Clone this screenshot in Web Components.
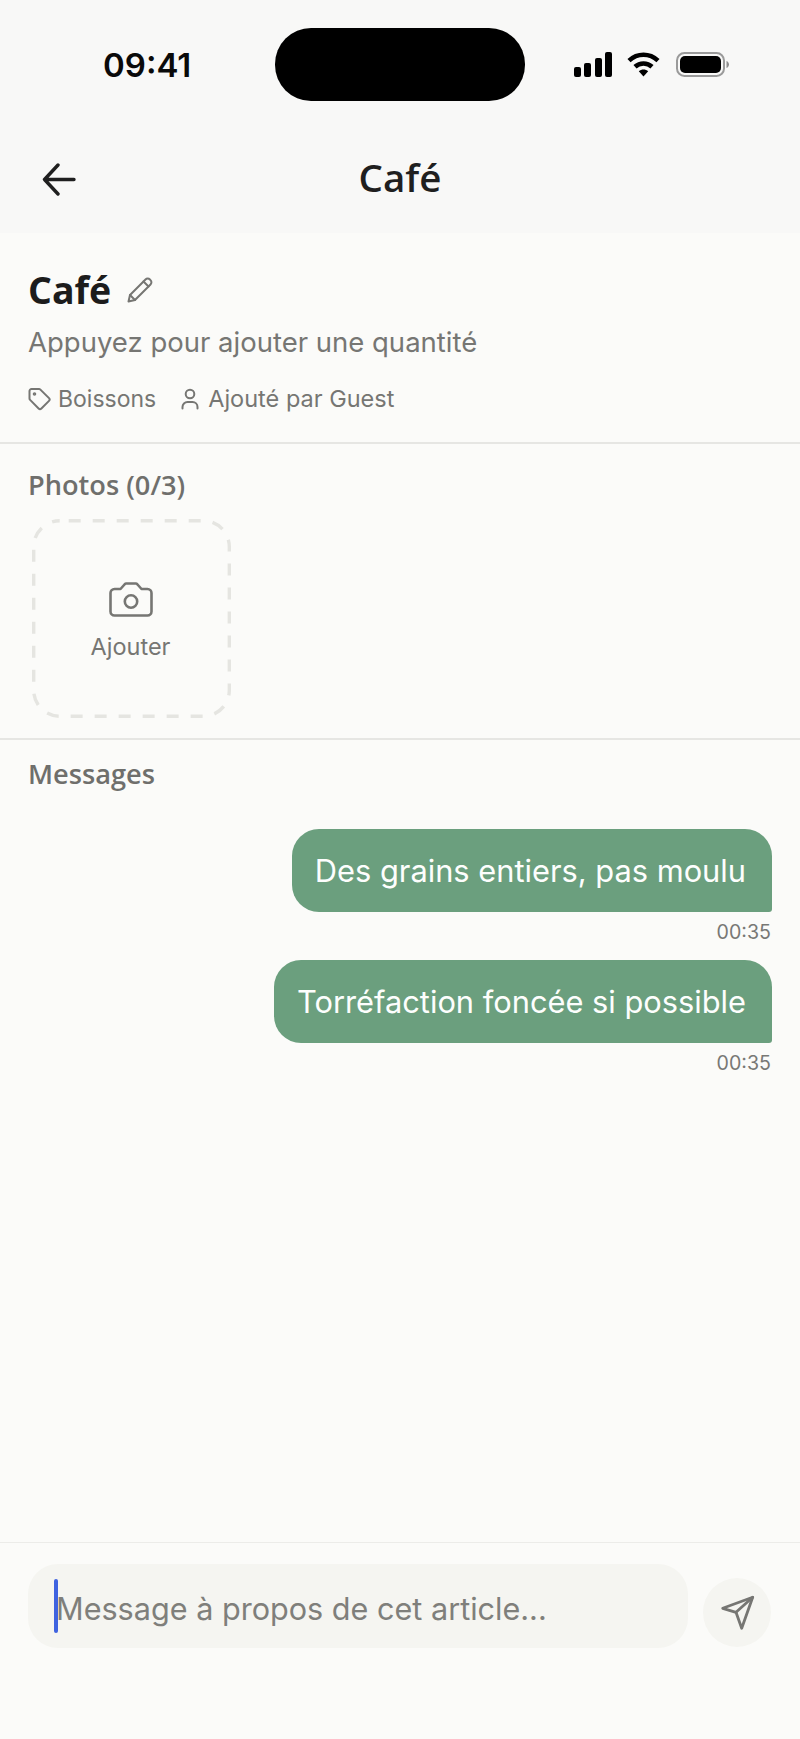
<!DOCTYPE html>
<html lang="fr">
<head>
<meta charset="utf-8">
<title>Café</title>
<style>
  html, body { margin: 0; padding: 0; background: #fbfbf9; }
  body { width: 800px; height: 1739px; overflow: hidden; font-family: "Open Sans", sans-serif; }
</style>
</head>
<body>
<app-screen>
  <status-bar time="09:41"></status-bar>
  <nav-header title="Café"></nav-header>
  <item-summary name="Café" hint="Appuyez pour ajouter une quantité" category="Boissons" author="Ajouté par Guest"></item-summary>
  <photo-section label="Photos (0/3)" action="Ajouter"></photo-section>
  <message-section label="Messages">
    <chat-bubble time="00:35">Des grains entiers, pas moulu</chat-bubble>
    <chat-bubble time="00:35">Torréfaction foncée si possible</chat-bubble>
  </message-section>
  <message-composer placeholder="Message à propos de cet article..."></message-composer>
</app-screen>

<script>
class AppScreen extends HTMLElement {
    constructor() {
        super();
        this.attachShadow({ mode: 'open' }).innerHTML = `
      <style>
        :host { display: flex; flex-direction: column; width: 800px; height: 1739px; background: #fbfbf9; }
      </style>
      <slot></slot>`;
    }
}

class StatusBar extends HTMLElement {
    connectedCallback() {
        this.attachShadow({ mode: 'open' }).innerHTML = `
      <style>
        :host { display: flex; align-items: flex-start; height: 119px; background: #f8f8f7; padding-top: 28px; box-sizing: border-box; }
        .time { width: 275px; box-sizing: border-box; padding: 17px 0 0 103px; font: 600 33px/40px Inter, sans-serif; color: #0a0a0a; }
        .island { width: 250px; height: 73px; background: #000; border-radius: 36px; }
        .icons { display: flex; align-items: center; gap: 15px; padding: 24px 0 0 49px; }
        .icons svg:last-child { margin-left: 1px; }
        svg { display: block; }
      </style>
      <div class="time">${this.getAttribute('time')}</div>
      <div class="island"></div>
      <div class="icons">
        <svg width="38" height="25" viewBox="0 0 38 25" fill="#000">
          <rect x="0" y="15" width="7" height="10" rx="2"/>
          <rect x="10" y="11" width="7" height="14" rx="2"/>
          <rect x="21" y="6" width="7" height="19" rx="2"/>
          <rect x="31" y="0" width="7" height="25" rx="2"/>
        </svg>
        <svg width="33" height="25" viewBox="0 0 33 25" fill="none" stroke="#000" stroke-width="4.6">
          <path d="M2 8.6C10.500 .8 22.500 .8 31 8.600"/>
          <path d="M8 14.800C12.800 10.400 20.200 10.400 25 14.800"/>
          <path d="M11.800 19.300 16.500 24.500 21.200 19.300C18.500 16.900 14.500 16.900 11.800 19.300Z" fill="#000" stroke="none"/>
        </svg>
        <svg width="53" height="25" viewBox="0 0 53 25">
          <rect x="1" y="1" width="47" height="23" rx="7.500" fill="none" stroke="#9a9a9a" stroke-width="2"/>
          <rect x="4" y="4" width="41" height="17" rx="5" fill="#000"/>
          <path d="M50.500 9c1.600.6 2.500 2 2.500 3.500s-.9 2.900-2.500 3.500z" fill="#8e8e8e"/>
        </svg>
      </div>`;
    }
}

class NavHeader extends HTMLElement {
    connectedCallback() {
        this.attachShadow({ mode: 'open' }).innerHTML = `
      <style>
        :host { display: flex; align-items: center; justify-content: center; position: relative; height: 114px; background: #f8f8f7; }
        h1 { margin: 2px 0 0; font: 600 38.500px/50px "Open Sans", sans-serif; color: #1f1f1f; }
        svg { position: absolute; left: 42px; top: 44px; }
      </style>
      <svg width="34" height="33" viewBox="0 0 34 33" fill="none" stroke="#1f1f1f" stroke-width="3.4" stroke-linecap="round" stroke-linejoin="round">
        <path d="M32 16.500H2.500M16 2 2.500 16.500 16 31"/>
      </svg>
      <h1>${this.getAttribute('title')}</h1>`;
    }
}

class ItemSummary extends HTMLElement {
    connectedCallback() {
        this.attachShadow({ mode: 'open' }).innerHTML = `
      <style>
        :host { display: block; box-sizing: border-box; height: 211px; padding: 32px 28px 0; border-bottom: 2px solid #e6e6e3; color: #767673; }
        .title { display: flex; align-items: center; gap: 16px; height: 50px; }
        h2 { margin: 0; font: 700 37.500px/50px "Open Sans", sans-serif; color: #1c1c1c; }
        p { margin: 8px 0 0; font: 400 27.500px/38px Inter, sans-serif; }
        .meta { display: flex; align-items: center; margin-top: 21px; font: 400 23px/34px Inter, sans-serif; }
        .meta span { display: flex; align-items: center; gap: 7px; }
        .meta span + span { margin-left: 25px; gap: 9px; font-size: 23.500px; }
        svg { display: block; flex: none; }
      </style>
      <div class="title">
        <h2>${this.getAttribute('name')}</h2>
        <svg width="26" height="26" viewBox="0 0 26 26" fill="none" stroke="#767673" stroke-width="2" stroke-linejoin="round" stroke-linecap="round">
          <path d="M1.500 24.500 3 18 18.500 2.500a3.100 3.100 0 0 1 4.400 0l.6.600a3.100 3.100 0 0 1 0 4.400L8 23z"/>
          <path d="M3 18 8 23M16.500 4.500 21.500 9.500"/>
        </svg>
      </div>
      <p>${this.getAttribute('hint')}</p>
      <div class="meta">
        <span>
          <svg width="23" height="23" viewBox="0 0 23 23" fill="none" stroke="#767673" stroke-width="2" stroke-linejoin="round">
            <path d="M1.500 3v7.500a2 2 0 0 0 .6 1.400l8.500 8.600a2 2 0 0 0 2.800 0l7.600-7.600a2 2 0 0 0 0-2.800L12.400 1.600A2 2 0 0 0 11 1H3.500a2 2 0 0 0-2 2z"/>
            <circle cx="6.500" cy="6" r=".8"/>
          </svg>
          ${this.getAttribute('category')}
        </span>
        <span>
          <svg width="18" height="22" viewBox="0 0 18 22" fill="none" stroke="#767673" stroke-width="2" stroke-linecap="round">
            <circle cx="9" cy="6" r="4.300"/>
            <path d="M1.500 20.500v-1.500a5 5 0 0 1 5-5h5a5 5 0 0 1 5 5v1.500"/>
          </svg>
          ${this.getAttribute('author')}
        </span>
      </div>`;
    }
}

class PhotoSection extends HTMLElement {
    connectedCallback() {
        this.attachShadow({ mode: 'open' }).innerHTML = `
      <style>
        :host { display: block; box-sizing: border-box; height: 296px; padding: 23px 28px 0; border-bottom: 2px solid #e6e6e3; }
        h3 { margin: 0; font: 600 27.200px/36px "Open Sans", sans-serif; color: #6f6f6c; }
        .add { display: flex; flex-direction: column; align-items: center; position: relative; box-sizing: border-box; width: 199px; height: 199px; margin: 16px 0 0 4px; padding: 63px 2px 0 0; color: #767673; font: 400 23.500px/32px Inter, sans-serif; }
        .dash { position: absolute; left: 0; top: 0; margin: 0; }
        .cam { display: block; margin-bottom: 14px; }
      </style>
      <h3>${this.getAttribute('label')}</h3>
      <div class="add">
        <svg class="dash" width="199" height="199" viewBox="0 0 199 199" fill="none">
          <rect x="1.700" y="1.700" width="195.600" height="195.600" rx="26" stroke="#e5e5e1" stroke-width="3.400" stroke-dasharray="12 12" stroke-dashoffset="-9"/>
        </svg>
        <svg class="cam" width="44" height="35" viewBox="0 0 44 35" fill="none" stroke="#767673" stroke-width="2.600" stroke-linejoin="round">
          <path d="M5.500 7H11.500L15.500 2.500A2 2 0 0 1 17 1.500H27A2 2 0 0 1 28.500 2.500L32.500 7H38.500A4 4 0 0 1 42.500 11V29.500A4 4 0 0 1 38.500 33.500H5.500A4 4 0 0 1 1.500 29.500V11A4 4 0 0 1 5.500 7Z"/>
          <circle cx="22" cy="19.500" r="6.200"/>
        </svg>
        ${this.getAttribute('action')}
      </div>`;
    }
}

class MessageSection extends HTMLElement {
    connectedCallback() {
        this.attachShadow({ mode: 'open' }).innerHTML = `
      <style>
        :host { display: flex; flex-direction: column; flex: 1; box-sizing: border-box; padding: 16px 28px 0; border-bottom: 1px solid #ecece9; }
        h3 { margin: 0 0 37px; font: 600 27.200px/36px "Open Sans", sans-serif; color: #6f6f6c; }
        .list { display: flex; flex-direction: column; align-items: flex-end; gap: 13px; }
      </style>
      <h3>${this.getAttribute('label')}</h3>
      <div class="list"><slot></slot></div>`;
    }
}

class ChatBubble extends HTMLElement {
    connectedCallback() {
        this.attachShadow({ mode: 'open' }).innerHTML = `
      <style>
        :host { display: flex; flex-direction: column; align-items: flex-end; }
        .bubble { box-sizing: border-box; height: 83px; padding: 0 26px 0 23px; display: flex; align-items: center; background: #6b9f7e; color: #fdfefd; border-radius: 27px 27px 3px 27px; font: 400 30.800px/42px Inter, sans-serif; }
        .time { margin: 5px 1px 0 0; height: 30px; font: 400 19.600px/30px Inter, sans-serif; color: #787875; }
      </style>
      <div class="bubble"><slot></slot></div>
      <div class="time">${this.getAttribute('time')}</div>`;
    }
}

class MessageComposer extends HTMLElement {
    connectedCallback() {
        this.attachShadow({ mode: 'open' }).innerHTML = `
      <style>
        :host { display: flex; align-items: flex-start; gap: 15px; box-sizing: border-box; height: 196px; padding: 21px 29px 0 28px; }
        .field { display: flex; align-items: center; box-sizing: border-box; width: 660px; height: 84px; padding-left: 26px; border-radius: 30px; background: #f5f5f1; color: #7f7f7b; font: 400 30.600px/44px Inter, sans-serif; }
        .caret { flex: none; width: 4px; height: 54px; margin-top: -1px; border-radius: 2px; background: #3f63e0; }
        .text { margin: 6px 0 0 -2px; }
        .send { display: flex; align-items: center; justify-content: center; width: 68px; height: 69px; margin-top: 14px; border-radius: 50%; background: #f5f5f1; }
        svg { display: block; }
      </style>
      <div class="field"><span class="caret"></span><span class="text">${this.getAttribute('placeholder')}</span></div>
      <div class="send">
        <svg width="36" height="36" viewBox="0 0 36 36" fill="none" stroke="#767673" stroke-width="2.800" stroke-linejoin="round" stroke-linecap="round">
          <path d="M33.700 2.300 3.700 13.300 17 17.300 22.700 33.300Z"/>
          <path d="M33.700 2.300 17 17.300"/>
        </svg>
      </div>`;
    }
}

customElements.define('app-screen', AppScreen);
customElements.define('status-bar', StatusBar);
customElements.define('nav-header', NavHeader);
customElements.define('item-summary', ItemSummary);
customElements.define('photo-section', PhotoSection);
customElements.define('message-section', MessageSection);
customElements.define('chat-bubble', ChatBubble);
customElements.define('message-composer', MessageComposer);
</script>
</body>
</html>
